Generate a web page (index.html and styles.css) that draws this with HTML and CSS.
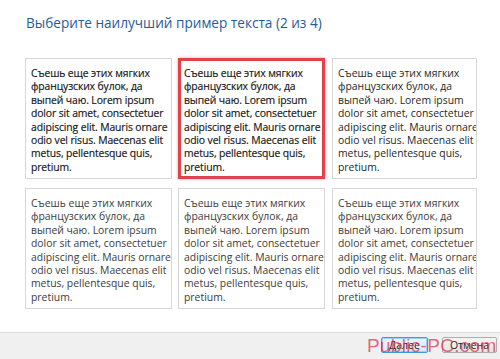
FILE: index.html
```html
<!DOCTYPE html>
<html lang="ru">
<head>
<meta charset="utf-8">
<title>ClearType</title>
<link rel="stylesheet" href="styles.css">
</head>
<body>
<div class="page">
  <main class="main">
    <h1 class="title">Выберите наилучший пример текста (2 из 4)</h1>
    <div class="grid">
      <div class="sample bold">Съешь еще этих мягких<br>французских булок, да<br>выпей чаю. Lorem ipsum<br>dolor sit amet, consectetuer<br>adipiscing elit. Mauris ornare<br>odio vel risus. Maecenas elit<br>metus, pellentesque quis,<br>pretium.</div>
      <div class="sample bold selected">Съешь еще этих мягких<br>французских булок, да<br>выпей чаю. Lorem ipsum<br>dolor sit amet, consectetuer<br>adipiscing elit. Mauris ornare<br>odio vel risus. Maecenas elit<br>metus, pellentesque quis,<br>pretium.</div>
      <div class="sample dark">Съешь еще этих мягких<br>французских булок, да<br>выпей чаю. Lorem ipsum<br>dolor sit amet, consectetuer<br>adipiscing elit. Mauris ornare<br>odio vel risus. Maecenas elit<br>metus, pellentesque quis,<br>pretium.</div>
      <div class="sample light">Съешь еще этих мягких<br>французских булок, да<br>выпей чаю. Lorem ipsum<br>dolor sit amet, consectetuer<br>adipiscing elit. Mauris ornare<br>odio vel risus. Maecenas elit<br>metus, pellentesque quis,<br>pretium.</div>
      <div class="sample light">Съешь еще этих мягких<br>французских булок, да<br>выпей чаю. Lorem ipsum<br>dolor sit amet, consectetuer<br>adipiscing elit. Mauris ornare<br>odio vel risus. Maecenas elit<br>metus, pellentesque quis,<br>pretium.</div>
      <div class="sample light">Съешь еще этих мягких<br>французских булок, да<br>выпей чаю. Lorem ipsum<br>dolor sit amet, consectetuer<br>adipiscing elit. Mauris ornare<br>odio vel risus. Maecenas elit<br>metus, pellentesque quis,<br>pretium.</div>
    </div>
  </main>
  <footer class="footer">
    <button class="btn primary">Далее</button>
    <button class="btn">Отмена</button>
    <span class="watermark">Public-PC.com</span>
  </footer>
</div>
</body>
</html>
```

FILE: styles.css
```css
* { box-sizing: border-box; }
html, body { margin: 0; padding: 0; background: #fff; }
body { font-family: "Open Sans", "Noto Sans", sans-serif; }
.page {
  width: 500px;
  height: 359px;
  display: flex;
  flex-direction: column;
  overflow: hidden;
}
.main {
  flex: 1;
  padding: 13px 0 0 25px;
}
.title {
  margin: 0 0 25px 1px;
  font-size: 13.6px;
  font-weight: 400;
  line-height: 20px;
  color: #1f5d9b;
}
.grid {
  display: grid;
  grid-template-columns: 147px 147px 146px;
  grid-auto-rows: 121px;
  column-gap: 6px;
  row-gap: 9px;
}
.grid .sample:nth-child(3n) { margin-left: 1px; }
.sample {
  border: 1px solid #d6d6d6;
  padding: 8px 2px 0 5px;
  font-size: 10.4px;
  line-height: 13.4px;
  color: #2a2a2a;
  white-space: nowrap;
  overflow: hidden;
}
.sample.bold { font-weight: 500; color: #141414; letter-spacing: -0.12px; -webkit-text-stroke: 0.15px #141414; }
.sample.dark { color: #1c2a2a; }
.sample.light { color: #3c3c3c; }
.sample.selected {
  border: 3px solid #e2434a;
  padding: 6px 0 0 3px;
  box-shadow: 0 0 3px rgba(200, 60, 60, 0.45);
}
.footer {
  position: relative;
  height: 27px;
  background: #f0f0f0;
  border-top: 1px solid #dcdcdc;
  display: flex;
  justify-content: flex-end;
  align-items: center;
  gap: 14px;
  padding: 0 3px 2px 0;
}
.btn {
  font-family: "Open Sans", "Noto Sans", sans-serif;
  font-size: 10.5px;
  line-height: 12px;
  height: 16px;
  padding: 0 6px;
  min-width: 47px;
  border: 1px solid #adadad;
  border-radius: 2px;
  background: linear-gradient(#f4f4f4, #e4e4e4);
  color: #222;
}
.btn + .btn { min-width: 55px; }
.btn.primary {
  border: 1px solid #3c9be0;
  box-shadow: inset 0 0 0 1px #9ad0f5;
  background: linear-gradient(#eaf4fc, #d8ebf9);
}
.watermark {
  position: absolute;
  left: 367px;
  top: 3px;
  font-family: "Liberation Sans", Arial, sans-serif;
  font-size: 19px;
  line-height: 20px;
  color: rgba(214, 60, 80, 0.75);
  letter-spacing: 0.3px;
  pointer-events: none;
}
```
